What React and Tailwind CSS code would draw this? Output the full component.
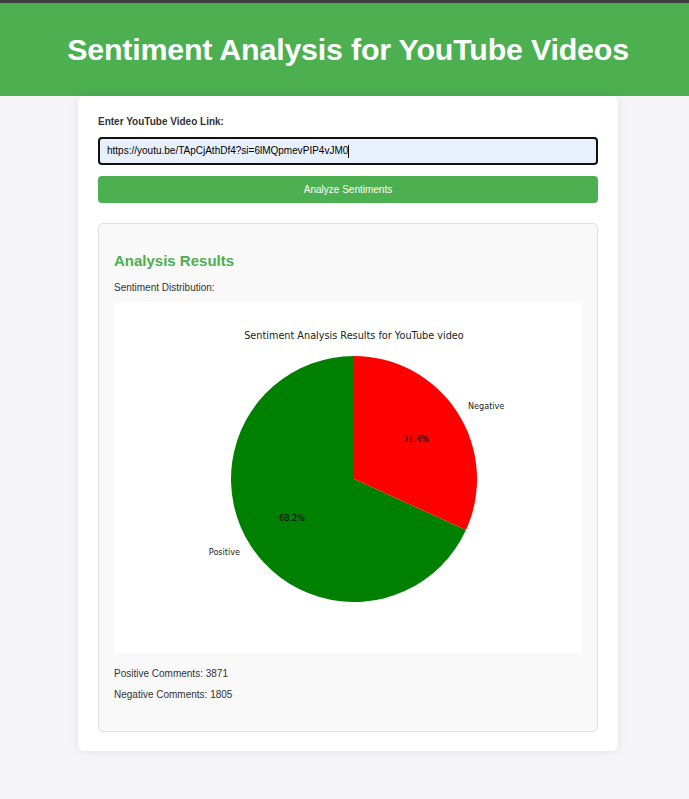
import React from "react";

// Pie chart of the comment split, drawn like the matplotlib figure the app returns.
function SentimentPie() {
  const cx = 240;
  const cy = 177;
  const r = 123;
  const negShare = 0.318;
  const a = negShare * 2 * Math.PI;
  const x2 = cx + r * Math.sin(a);
  const y2 = cy - r * Math.cos(a);

  return (
    <svg viewBox="0 0 468 351" width="468" height="351" className="block">
      <rect width="468" height="351" fill="#ffffff" />
      <text
        x="240"
        y="37"
        textAnchor="middle"
        fontFamily="'DejaVu Sans', sans-serif"
        fontSize="9.7"
        fill="#222"
      >
        Sentiment Analysis Results for YouTube video
      </text>
      <path
        d={`M ${cx} ${cy} L ${x2} ${y2} A ${r} ${r} 0 1 1 ${cx} ${cy - r} Z`}
        fill="#008000"
      />
      <path
        d={`M ${cx} ${cy} L ${cx} ${cy - r} A ${r} ${r} 0 0 1 ${x2} ${y2} Z`}
        fill="#ff0000"
      />
      <g fontFamily="'DejaVu Sans', sans-serif" fontSize="8.1" fill="#222">
        <text x="354" y="107">Negative</text>
        <text x="126" y="253" textAnchor="end">Positive</text>
      </g>
      <g fontFamily="'DejaVu Sans', sans-serif" fontSize="8.1" fill="#000">
        <text x="302" y="140" textAnchor="middle">31.8%</text>
        <text x="178" y="219" textAnchor="middle">68.2%</text>
      </g>
    </svg>
  );
}

export default function App() {
  return (
    <div
      className="min-h-[799px] bg-[#f4f4f9] text-[#333]"
      style={{ fontFamily: "'Liberation Sans', Arial, sans-serif" }}
    >
      <div className="h-[3px] bg-[#3f3f3f]" />
      {/* Header */}
      <header className="h-[93px] bg-[#4caf50] flex items-center justify-center pl-[7px]">
        <h1 className="text-white font-bold text-[30.4px] leading-none tracking-[-0.2px]">
          Sentiment Analysis for YouTube Videos
        </h1>
      </header>

      <div className="flex justify-center pl-[7px] pb-[48px]">
        <main className="w-[540px] bg-white rounded-[6px] shadow-[0_0_10px_rgba(0,0,0,0.08)] px-[20px] pt-[20px] pb-[19px]">
          <label className="block text-[10px] font-bold text-[#333] leading-[12px]">
            Enter YouTube Video Link:
          </label>
          <div className="mt-[9px] h-[28px] rounded-[4px] border-2 border-[#111] bg-[#e8f0fe] flex items-center px-[7px]">
            <span className="text-[10px] text-black leading-none">
              https://youtu.be/TApCjAthDf4?si=6lMQpmevPIP4vJM0
            </span>
            <span className="w-px h-[13px] bg-black" />
          </div>
          <button className="mt-[11px] w-full h-[27px] rounded-[4px] bg-[#4caf50] text-white text-[10px] leading-none">
            Analyze Sentiments
          </button>

          {/* Results */}
          <section className="mt-[20px] bg-[#f9f9f9] border border-[#ddd] rounded-[5px] px-[15px] pt-[28px] pb-[30px]">
            <h3 className="text-[15px] font-bold text-[#4caf50] leading-[18px]">
              Analysis Results
            </h3>
            <p className="mt-[12px] text-[10px] leading-[12px] text-[#333]">
              Sentiment Distribution:
            </p>
            <div className="mt-[8px]">
              <SentimentPie />
            </div>
            <p className="mt-[15px] text-[10px] leading-[12px] text-[#333]">
              Positive Comments: 3871
            </p>
            <p className="mt-[9px] text-[10px] leading-[12px] text-[#333]">
              Negative Comments: 1805
            </p>
          </section>
        </main>
      </div>
    </div>
  );
}
